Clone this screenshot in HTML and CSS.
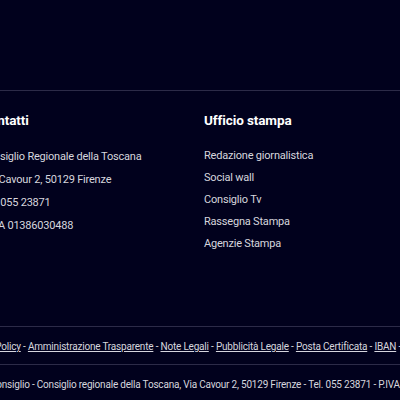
FILE: index.html
```html
<!DOCTYPE html>
<html lang="it">
<head>
  <meta charset="UTF-8" />
  <meta name="viewport" content="width=device-width, initial-scale=1.0"/>
  <title>Consiglio Regionale della Toscana</title>
  <link rel="stylesheet" href="styles.css">
</head>
<body>

<footer class="site-footer">
  <div class="footer-main">
    <div class="footer-cols">
      <div class="footer-col contacts">
        <h3>Contatti</h3>
        <ul>
          <li>Consiglio Regionale della Toscana</li>
          <li>Via Cavour 2, 50129 Firenze</li>
          <li>Tel. 055 23871</li>
          <li>P.IVA 01386030488</li>
        </ul>
      </div>
      <div class="footer-col press">
        <h3>Ufficio stampa</h3>
        <ul>
          <li><a href="#">Redazione giornalistica</a></li>
          <li><a href="#">Social wall</a></li>
          <li><a href="#">Consiglio Tv</a></li>
          <li><a href="#">Rassegna Stampa</a></li>
          <li><a href="#">Agenzie Stampa</a></li>
        </ul>
      </div>
    </div>
  </div>

  <div class="footer-links">
    <p>
      <a href="#">Privacy Policy</a> -
      <a href="#">Amministrazione Trasparente</a> -
      <a href="#">Note Legali</a> -
      <a href="#">Pubblicità Legale</a> -
      <a href="#">Posta Certificata</a> -
      <a href="#">IBAN</a> -
      <a href="#">Accessibilità</a>
    </p>
  </div>

  <div class="footer-copy">
    <p>© Consiglio - Consiglio regionale della Toscana, Via Cavour 2, 50129 Firenze - Tel. 055 23871 - P.IVA 01386030488</p>
  </div>
</footer>

</body>
</html>
```

FILE: styles.css
```css
:root {
  --bg: #01011d;
  --line: #2c2b48;
  --text: #d6d6de;
  --white: #ffffff;
}

* {
  box-sizing: border-box;
  margin: 0;
  padding: 0;
}

body {
  font-family: Roboto, 'Noto Sans', sans-serif;
  background: var(--bg);
  color: var(--text);
  overflow: hidden;
}

.site-footer {
  padding-top: 90px;
}

.footer-main {
  border-top: 1px solid var(--line);
  border-bottom: 1px solid var(--line);
  padding: 19px 0 71px;
}

/* columns start a little left of the viewport */
.footer-cols {
  display: grid;
  grid-template-columns: 223px 223px;
  margin-left: -19px;
  width: 446px;
}

.footer-col h3 {
  color: var(--white);
  font-size: 13.5px;
  font-weight: 700;
  line-height: 20px;
  letter-spacing: -0.1px;
  margin-bottom: 15px;
}

.footer-col ul {
  list-style: none;
  font-size: 11px;
  letter-spacing: -0.2px;
}

.contacts li {
  line-height: 23px;
}

.press li {
  line-height: 22px;
}

.footer-col a {
  color: var(--text);
  text-decoration: none;
}

.footer-links {
  border-bottom: 1px solid var(--line);
  padding: 12px 0 10px;
  font-size: 10px;
  line-height: 15px;
  letter-spacing: -0.2px;
  white-space: nowrap;
}

.footer-links p {
  margin-left: -38px;
}

.footer-links a {
  color: var(--text);
  text-decoration: underline;
}

.footer-copy {
  padding: 12px 0 10px;
  font-size: 10px;
  line-height: 15px;
  letter-spacing: -0.2px;
  white-space: nowrap;
}

.footer-copy p {
  margin-left: -20px;
}
```
